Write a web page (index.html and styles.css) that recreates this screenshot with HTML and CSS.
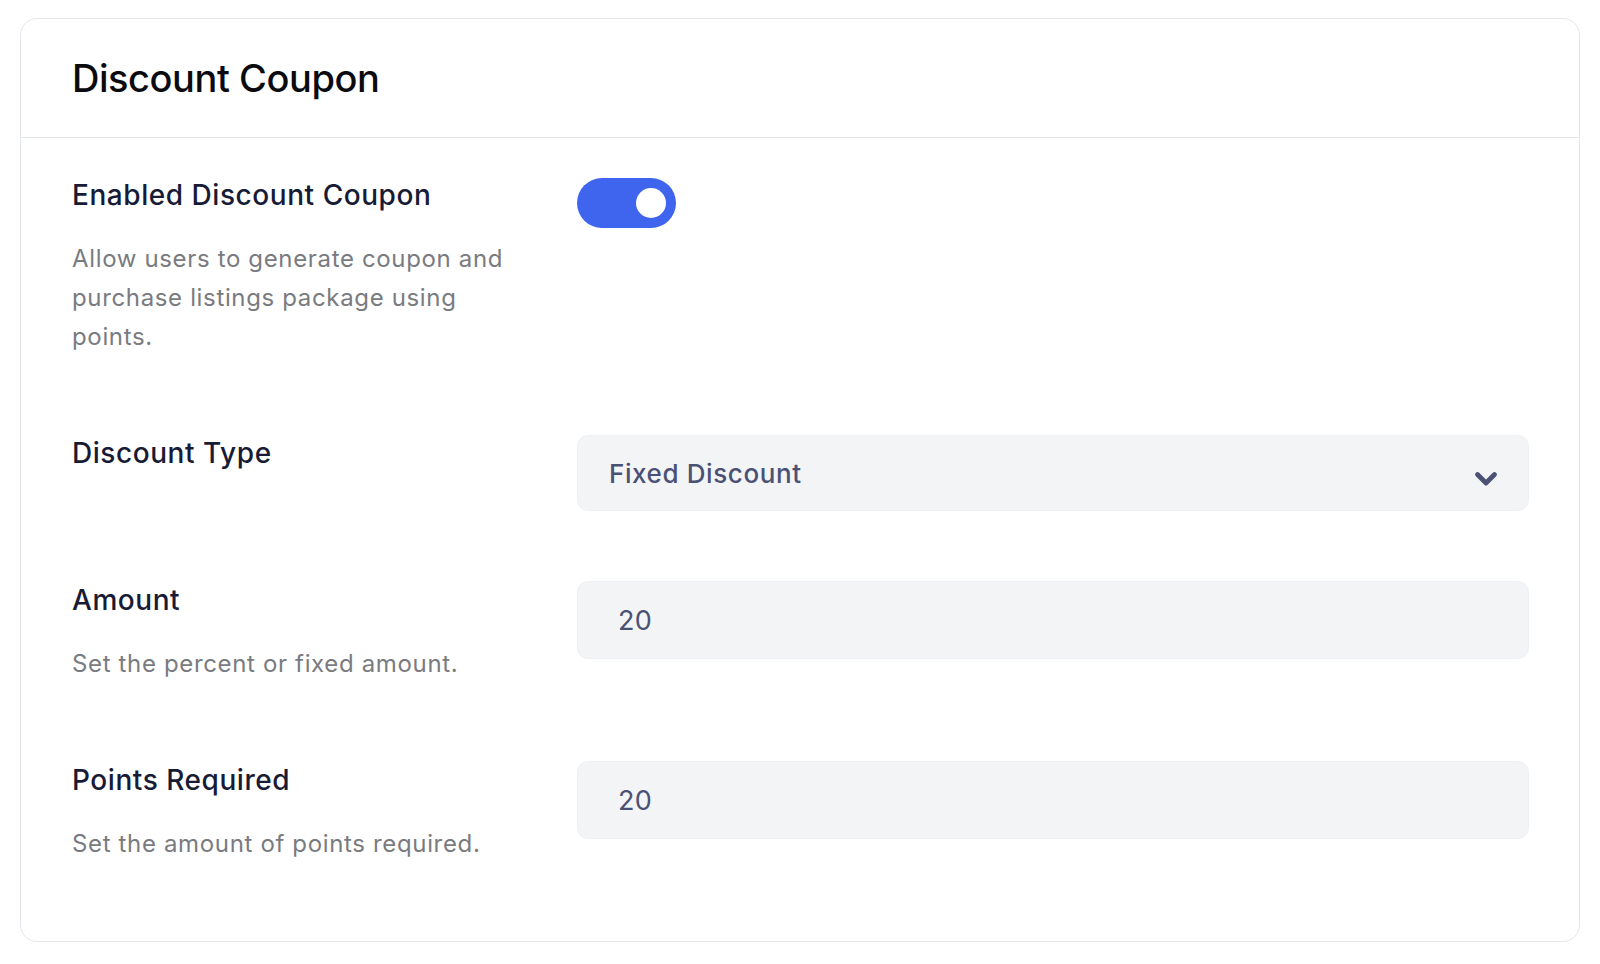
FILE: index.html
```html
<!DOCTYPE html>
<html lang="en">
<head>
<meta charset="utf-8">
<title>Discount Coupon</title>
<link rel="stylesheet" href="styles.css">
</head>
<body>
<div class="card">
  <div class="card-header">
    <h1 class="card-title">Discount Coupon</h1>
  </div>
  <div class="card-body">
    <div class="row row-1">
      <div class="row-label">
        <div class="label">Enabled Discount Coupon</div>
        <div class="desc">Allow users to generate coupon and purchase listings package using points.</div>
      </div>
      <div class="row-control">
        <div class="toggle"><span class="knob"></span></div>
      </div>
    </div>
    <div class="row row-2">
      <div class="row-label">
        <div class="label">Discount Type</div>
      </div>
      <div class="row-control">
        <div class="select">
          <span class="select-text">Fixed Discount</span>
          <svg class="chevron" width="24" height="16" viewBox="0 0 24 16"><path d="M3.5 3.5 L12 12 L20.5 3.5" fill="none" stroke="#4b5175" stroke-width="4.8" stroke-linecap="round" stroke-linejoin="round"/></svg>
        </div>
      </div>
    </div>
    <div class="row row-3">
      <div class="row-label">
        <div class="label">Amount</div>
        <div class="desc">Set the percent or fixed amount.</div>
      </div>
      <div class="row-control">
        <input class="input" type="text" value="20">
      </div>
    </div>
    <div class="row row-4">
      <div class="row-label">
        <div class="label">Points Required</div>
        <div class="desc">Set the amount of points required.</div>
      </div>
      <div class="row-control">
        <input class="input" type="text" value="20">
      </div>
    </div>
  </div>
</div>
</body>
</html>
```
FILE: styles.css
```css
* {
  box-sizing: border-box;
}

html, body {
  margin: 0;
  padding: 0;
  background: #ffffff;
}

body {
  font-family: Inter, "Noto Sans", "Liberation Sans", sans-serif;
  -webkit-font-smoothing: antialiased;
}

.card {
  margin: 18px 20px;
  width: 1560px;
  background: #ffffff;
  border: 1.5px solid #e3e6ef;
  border-radius: 17px;
}

.card-header {
  height: 119px;
  display: flex;
  align-items: center;
  padding-left: 51px;
  border-bottom: 1.5px solid #e3e6ef;
}

.card-title {
  margin: 0;
  font-size: 38px;
  line-height: 46px;
  font-weight: 500;
  color: #0b0b0f;
  letter-spacing: -0.45px;
}

.card-body {
  padding: 37px 50px 78px 51px;
}

.row {
  display: grid;
  grid-template-columns: 450px 1fr;
  column-gap: 55px;
  align-items: start;
}

.row-1 { margin-bottom: 77px; }
.row-2 { margin-bottom: 69px; }
.row-3 { margin-bottom: 77px; }

.label {
  font-size: 28px;
  line-height: 40px;
  font-weight: 500;
  color: #171b35;
  letter-spacing: 0.55px;
}

.desc {
  margin-top: 24px;
  font-size: 24px;
  line-height: 39px;
  font-weight: 400;
  color: #797b80;
  letter-spacing: 0.65px;
}

.toggle {
  margin-top: 3px;
  width: 99px;
  height: 50px;
  border-radius: 25px;
  background: #3f65ee;
  display: flex;
  align-items: center;
  justify-content: flex-end;
  padding-right: 10px;
}

.knob {
  width: 30px;
  height: 30px;
  border-radius: 50%;
  background: #ffffff;
}

.row-2 .row-control {
  margin-top: 2px;
}

.select {
  height: 76px;
  background: #f3f4f6;
  border: 1px solid #eef0f4;
  border-radius: 11px;
  display: flex;
  align-items: center;
  justify-content: space-between;
  padding: 0 30px 0 31px;
}

.select-text {
  font-size: 26px;
  font-weight: 500;
  color: #4b5175;
  letter-spacing: 0.6px;
}

.chevron {
  display: block;
  margin-top: 12px;
}

.row-3 .row-control,
.row-4 .row-control {
  margin-top: 1px;
}

.input {
  display: block;
  width: 100%;
  height: 78px;
  background: #f3f4f6;
  border: 1px solid #eef0f4;
  border-radius: 11px;
  padding: 0 0 0 40px;
  font-family: Inter, "Noto Sans", "Liberation Sans", sans-serif;
  font-size: 27px;
  font-weight: 400;
  color: #4b5175;
  letter-spacing: 0.3px;
  outline: none;
}
```
